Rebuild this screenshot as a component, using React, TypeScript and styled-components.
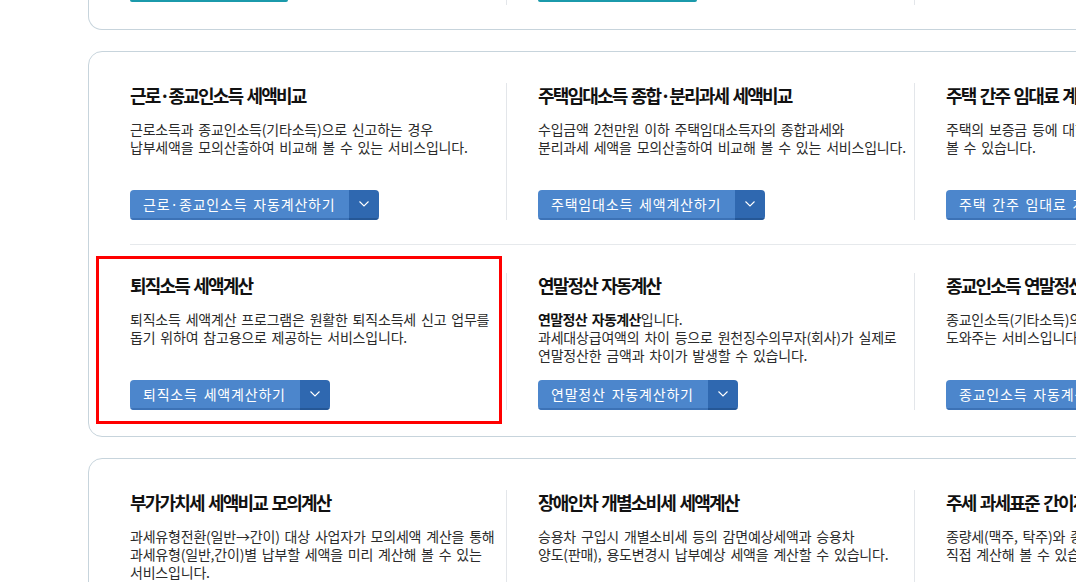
import { Fragment } from "react";
import styled, { createGlobalStyle } from "styled-components";

type Service = {
  title: string;
  lines: React.ReactNode[];
  action: string;
  highlighted?: boolean;
};

const SERVICE_GROUPS: Service[][][] = [
  [
    [
      {
        title: "근로·종교인소득 세액비교",
        lines: [
          "근로소득과 종교인소득(기타소득)으로 신고하는 경우",
          "납부세액을 모의산출하여 비교해 볼 수 있는 서비스입니다.",
        ],
        action: "근로·종교인소득 자동계산하기",
      },
      {
        title: "주택임대소득 종합·분리과세 세액비교",
        lines: [
          "수입금액 2천만원 이하 주택임대소득자의 종합과세와",
          "분리과세 세액을 모의산출하여 비교해 볼 수 있는 서비스입니다.",
        ],
        action: "주택임대소득 세액계산하기",
      },
      {
        title: "주택 간주 임대료 계산",
        lines: ["주택의 보증금 등에 대한 간주임대료를 계산해", "볼 수 있습니다."],
        action: "주택 간주 임대료 계산하기",
      },
    ],
    [
      {
        title: "퇴직소득 세액계산",
        lines: [
          "퇴직소득 세액계산 프로그램은 원활한 퇴직소득세 신고 업무를",
          "돕기 위하여 참고용으로 제공하는 서비스입니다.",
        ],
        action: "퇴직소득 세액계산하기",
        highlighted: true,
      },
      {
        title: "연말정산 자동계산",
        lines: [
          <>
            <b>연말정산 자동계산</b>입니다.
          </>,
          "과세대상급여액의 차이 등으로 원천징수의무자(회사)가 실제로",
          "연말정산한 금액과 차이가 발생할 수 있습니다.",
        ],
        action: "연말정산 자동계산하기",
      },
      {
        title: "종교인소득 연말정산 자동계산",
        lines: ["종교인소득(기타소득)의 연말정산 신고를", "도와주는 서비스입니다."],
        action: "종교인소득 자동계산하기",
      },
    ],
  ],
  [
    [
      {
        title: "부가가치세 세액비교 모의계산",
        lines: [
          "과세유형전환(일반→간이) 대상 사업자가 모의세액 계산을 통해",
          "과세유형(일반,간이)별 납부할 세액을 미리 계산해 볼 수 있는",
          "서비스입니다.",
        ],
        action: "부가가치세 모의계산하기",
      },
      {
        title: "장애인차 개별소비세 세액계산",
        lines: [
          "승용차 구입시 개별소비세 등의 감면예상세액과 승용차",
          "양도(판매), 용도변경시 납부예상 세액을 계산할 수 있습니다.",
        ],
        action: "개별소비세 세액계산하기",
      },
      {
        title: "주세 과세표준 간이계산",
        lines: ["종량세(맥주, 탁주)와 종가세 주류의 과세표준을", "직접 계산해 볼 수 있습니다."],
        action: "주세 간이계산하기",
      },
    ],
  ],
];

export default function App() {
  return (
    <>
      <GlobalStyle />
      <Page>
        <CardTail>
          <TailCell>
            <TealStub $width={158} />
          </TailCell>
          <TailCell>
            <TealStub $width={159} />
          </TailCell>
          <TailCell />
        </CardTail>

        {SERVICE_GROUPS.map((rows, gi) => (
          <Card key={gi}>
            {rows.map((row, ri) => (
              <Fragment key={ri}>
                {ri > 0 && <RowDivider />}
                <Row>
                  {row.map((s) => (
                    <Cell key={s.title}>
                      {s.highlighted && <Highlight />}
                      <Title>{s.title}</Title>
                      <Desc>
                        {s.lines.map((l, li) => (
                          <Line key={li}>{l}</Line>
                        ))}
                      </Desc>
                      <SplitButton>
                        <MainAction type="button">{s.action}</MainAction>
                        <MenuToggle type="button" aria-label="더보기">
                          <ChevronDown />
                        </MenuToggle>
                      </SplitButton>
                    </Cell>
                  ))}
                </Row>
              </Fragment>
            ))}
          </Card>
        ))}
      </Page>
    </>
  );
}

const ChevronDown = () => (
  <svg width="10" height="6" viewBox="0 0 10 6" fill="none">
    <polyline points="0.5,0.5 5,5 9.5,0.5" stroke="#fff" strokeWidth="1.1" />
  </svg>
);

/* --- styles --- */

const GlobalStyle = createGlobalStyle`
  html, body {
    margin: 0;
    padding: 0;
    background: #fff;
    overflow: hidden;
  }
  body {
    font-family: "Noto Sans CJK KR", "Noto Sans", sans-serif;
    color: #222;
  }
`;

const Page = styled.div`
  width: 1400px;
  padding-left: 88px;
  display: flex;
  flex-direction: column;
  gap: 21px;
`;

const Card = styled.section`
  width: 1260px;
  background: #fff;
  border: 1px solid #c7d4dc;
  border-radius: 14px;
  padding: 31px 0 26px 9px;
`;

const CardTail = styled.div`
  width: 1260px;
  height: 29px;
  border: 1px solid #c7d4dc;
  border-top: none;
  border-radius: 0 0 14px 14px;
  padding-left: 9px;
  display: grid;
  grid-template-columns: repeat(3, 408px);
  box-sizing: content-box;
`;

const TailCell = styled.div`
  height: 5px;
  padding-left: 31px;
  border-left: 1px solid transparent;

  & + & {
    border-left-color: #e3e6ea;
  }
`;

const TealStub = styled.div<{ $width: number }>`
  width: ${({ $width }) => $width}px;
  height: 2px;
  background: #1b9aab;
  border-radius: 0 0 3px 3px;
`;

const Row = styled.div`
  display: grid;
  grid-template-columns: repeat(3, 408px);
`;

const RowDivider = styled.div`
  height: 1px;
  background: #e6e9ec;
  margin: 24px 0 28px 32px;
`;

const Cell = styled.div`
  position: relative;
  box-sizing: border-box;
  display: flex;
  flex-direction: column;
  align-items: flex-start;
  padding-left: 31px;
  border-left: 1px solid transparent;
  white-space: nowrap;

  & + & {
    border-left-color: #e3e6ea;
  }
`;

const Highlight = styled.div`
  position: absolute;
  top: -17px;
  left: -3px;
  right: 4px;
  bottom: -14px;
  border: 3px solid #f00;
  pointer-events: none;
`;

const Title = styled.h3`
  margin: 0;
  font-size: 18px;
  line-height: 24px;
  font-weight: 700;
  letter-spacing: -1.8px;
  word-spacing: 2px;
  color: #111;
`;

const Desc = styled.div`
  margin: 13px 0 15px;
  min-height: 55px;
  font-size: 14px;
  line-height: 18px;
  color: #2b2b2b;
  letter-spacing: -0.2px;
  word-spacing: 2px;

  b {
    font-weight: 700;
    color: #111;
    letter-spacing: -0.6px;
  }
`;

const Line = styled.div``;

const SplitButton = styled.div`
  display: flex;
  height: 30px;
  border-radius: 4px;
  overflow: hidden;
`;

const MainAction = styled.button`
  border: none;
  margin: 0;
  padding: 0 14px 0 13px;
  background: #4c86cc;
  color: #fff;
  font-family: inherit;
  font-size: 14px;
  line-height: 28px;
  letter-spacing: 0.8px;
  word-spacing: 2px;
  border-bottom: 2px solid #3c72b6;
  cursor: pointer;
`;

const MenuToggle = styled.button`
  width: 30px;
  border: none;
  margin: 0;
  padding: 0;
  background: #2f68b0;
  border-bottom: 2px solid #255796;
  display: flex;
  align-items: center;
  justify-content: center;
  cursor: pointer;
`;
